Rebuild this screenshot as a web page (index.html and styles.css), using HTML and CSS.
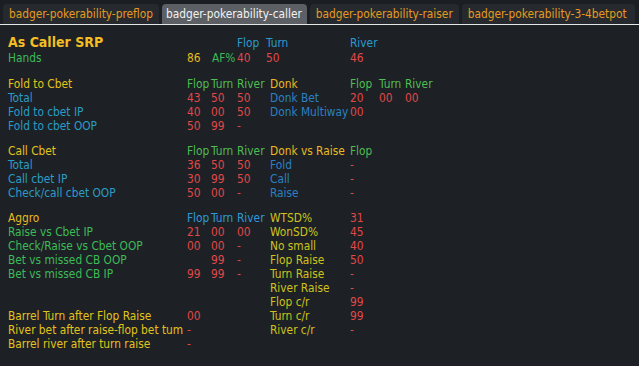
FILE: index.html
```html
<!DOCTYPE html>
<html>
<head>
<meta charset="utf-8">
<link rel="stylesheet" href="styles.css">
</head>
<body>
<nav class="tabs">
  <div class="tab">badger-pokerability-preflop</div>
  <div class="tab active">badger-pokerability-caller</div>
  <div class="tab">badger-pokerability-raiser</div>
  <div class="tab">badger-pokerability-3-4betpot</div>
</nav>
<main class="hud">
  <section class="block head">
    <div class="row top title-row">
      <span class="title">As Caller SRP</span><span></span><span></span><span class="hblue">Flop</span><span class="hblue">Turn</span><span class="hblue">River</span>
    </div>
    <div class="row top">
      <span class="green">Hands</span><span class="gold">86</span><span class="green">AF%</span><span class="red">40</span><span class="red">50</span><span class="red">46</span>
    </div>
  </section>

  <section class="block">
    <div class="row">
      <span class="yellow">Fold to Cbet</span><span class="lgreen">Flop</span><span class="lgreen">Turn</span><span class="lgreen">River</span><span class="gold">Donk</span><span class="lgreen">Flop</span><span class="lgreen">Turn</span><span class="lgreen">River</span>
    </div>
    <div class="row">
      <span class="cyan">Total</span><span class="red">43</span><span class="red">50</span><span class="red">50</span><span class="blue">Donk Bet</span><span class="red">20</span><span class="red">00</span><span class="red">00</span>
    </div>
    <div class="row">
      <span class="cyan">Fold to cbet IP</span><span class="red">40</span><span class="red">00</span><span class="red">50</span><span class="blue">Donk Multiway</span><span class="red">00</span><span></span><span></span>
    </div>
    <div class="row">
      <span class="cyan">Fold to cbet OOP</span><span class="red">50</span><span class="red">99</span><span class="red">-</span><span></span><span></span><span></span><span></span>
    </div>
  </section>

  <section class="block">
    <div class="row">
      <span class="yellow">Call Cbet</span><span class="lgreen">Flop</span><span class="lgreen">Turn</span><span class="lgreen">River</span><span class="gold">Donk vs Raise</span><span class="lgreen">Flop</span><span></span><span></span>
    </div>
    <div class="row">
      <span class="cyan">Total</span><span class="red">36</span><span class="red">50</span><span class="red">50</span><span class="blue">Fold</span><span class="red">-</span><span></span><span></span>
    </div>
    <div class="row">
      <span class="cyan">Call cbet IP</span><span class="red">30</span><span class="red">99</span><span class="red">50</span><span class="blue">Call</span><span class="red">-</span><span></span><span></span>
    </div>
    <div class="row">
      <span class="cyan">Check/call cbet OOP</span><span class="red">50</span><span class="red">00</span><span class="red">-</span><span class="blue">Raise</span><span class="red">-</span><span></span><span></span>
    </div>
  </section>

  <section class="block">
    <div class="row">
      <span class="gold">Aggro</span><span class="ablue">Flop</span><span class="ablue">Turn</span><span class="ablue">River</span><span class="olive">WTSD%</span><span class="red">31</span><span></span><span></span>
    </div>
    <div class="row">
      <span class="green">Raise vs Cbet IP</span><span class="red">21</span><span class="red">00</span><span class="red">00</span><span class="olive">WonSD%</span><span class="red">45</span><span></span><span></span>
    </div>
    <div class="row">
      <span class="green">Check/Raise vs Cbet OOP</span><span class="red">00</span><span class="red">00</span><span class="red">-</span><span class="olive">No small</span><span class="red">40</span><span></span><span></span>
    </div>
    <div class="row">
      <span class="green">Bet vs missed CB OOP</span><span></span><span class="red">99</span><span class="red">-</span><span class="olive">Flop Raise</span><span class="red">50</span><span></span><span></span>
    </div>
    <div class="row">
      <span class="green">Bet vs missed CB IP</span><span class="red">99</span><span class="red">99</span><span class="red">-</span><span class="olive">Turn Raise</span><span class="red">-</span><span></span><span></span>
    </div>
    <div class="row">
      <span></span><span></span><span></span><span></span><span class="olive">River Raise</span><span class="red">-</span><span></span><span></span>
    </div>
    <div class="row">
      <span></span><span></span><span></span><span></span><span class="olive">Flop c/r</span><span class="red">99</span><span></span><span></span>
    </div>
    <div class="row">
      <span class="yellow">Barrel Turn after Flop Raise</span><span class="red">00</span><span></span><span></span><span class="olive">Turn c/r</span><span class="red">99</span><span></span><span></span>
    </div>
    <div class="row">
      <span class="yellow">River bet after raise-flop bet tum</span><span class="red">-</span><span></span><span></span><span class="olive">River c/r</span><span class="red">-</span><span></span><span></span>
    </div>
    <div class="row">
      <span class="yellow">Barrel river after turn raise</span><span class="red">-</span><span></span><span></span><span></span><span></span><span></span><span></span>
    </div>
  </section>
</main>
</body>
</html>
```

FILE: styles.css
```css
html, body {
  margin: 0;
  padding: 0;
  background: #1d2125;
  height: 100%;
}
body {
  font-family: "DejaVu Sans Condensed", "Liberation Sans", sans-serif;
  font-stretch: condensed;
  font-size: 11.8px;
  overflow: hidden;
}
.tabs {
  display: flex;
  align-items: flex-end;
  gap: 3px;
  height: 24px;
  padding-left: 3px;
  border-bottom: 1px solid #e6e6e6;
  background: #1b1e22;
  box-sizing: content-box;
}
.tab {
  height: 20px;
  line-height: 20px;
  padding: 0 6px;
  font-size: 11.8px;
  color: #e69a1e;
  background: #262a2f;
  border-radius: 4px 4px 0 0;
  white-space: nowrap;
}
.tab.active {
  background: #5c6064;
  color: #f2f2f2;
  padding: 0 5px 0 4px;
}
.tab:last-child {
  padding-right: 8px;
}
.hud {
  padding: 8px 0 0 8px;
  display: flex;
  flex-direction: column;
  gap: 11px;
}
.head {
  margin-bottom: 1px;
}
.row {
  display: grid;
  grid-template-columns: 179px 24px 26px 33px 80px 29px 26px 1fr;
  height: 14px;
  line-height: 14px;
  white-space: nowrap;
}
.row span {
  min-width: 0;
}
.row.top {
  grid-template-columns: 179px 25px 25px 29px 84px 1fr;
}
.title-row {
  height: 18px;
  line-height: 18px;
  align-items: baseline;
}
.title {
  font-weight: bold;
  font-size: 14px;
  color: #f2be24;
}
.hblue { color: #2c9ad0; }
.ablue { color: #2e9ada; }
.cyan { color: #2a9cc6; }
.blue { color: #2a80c2; }
.green { color: #3dba58; }
.lgreen { color: #4fbd52; }
.yellow { color: #e2c41c; }
.gold { color: #e8ba20; }
.olive { color: #cfc21c; }
.red { color: #e24848; }
```
